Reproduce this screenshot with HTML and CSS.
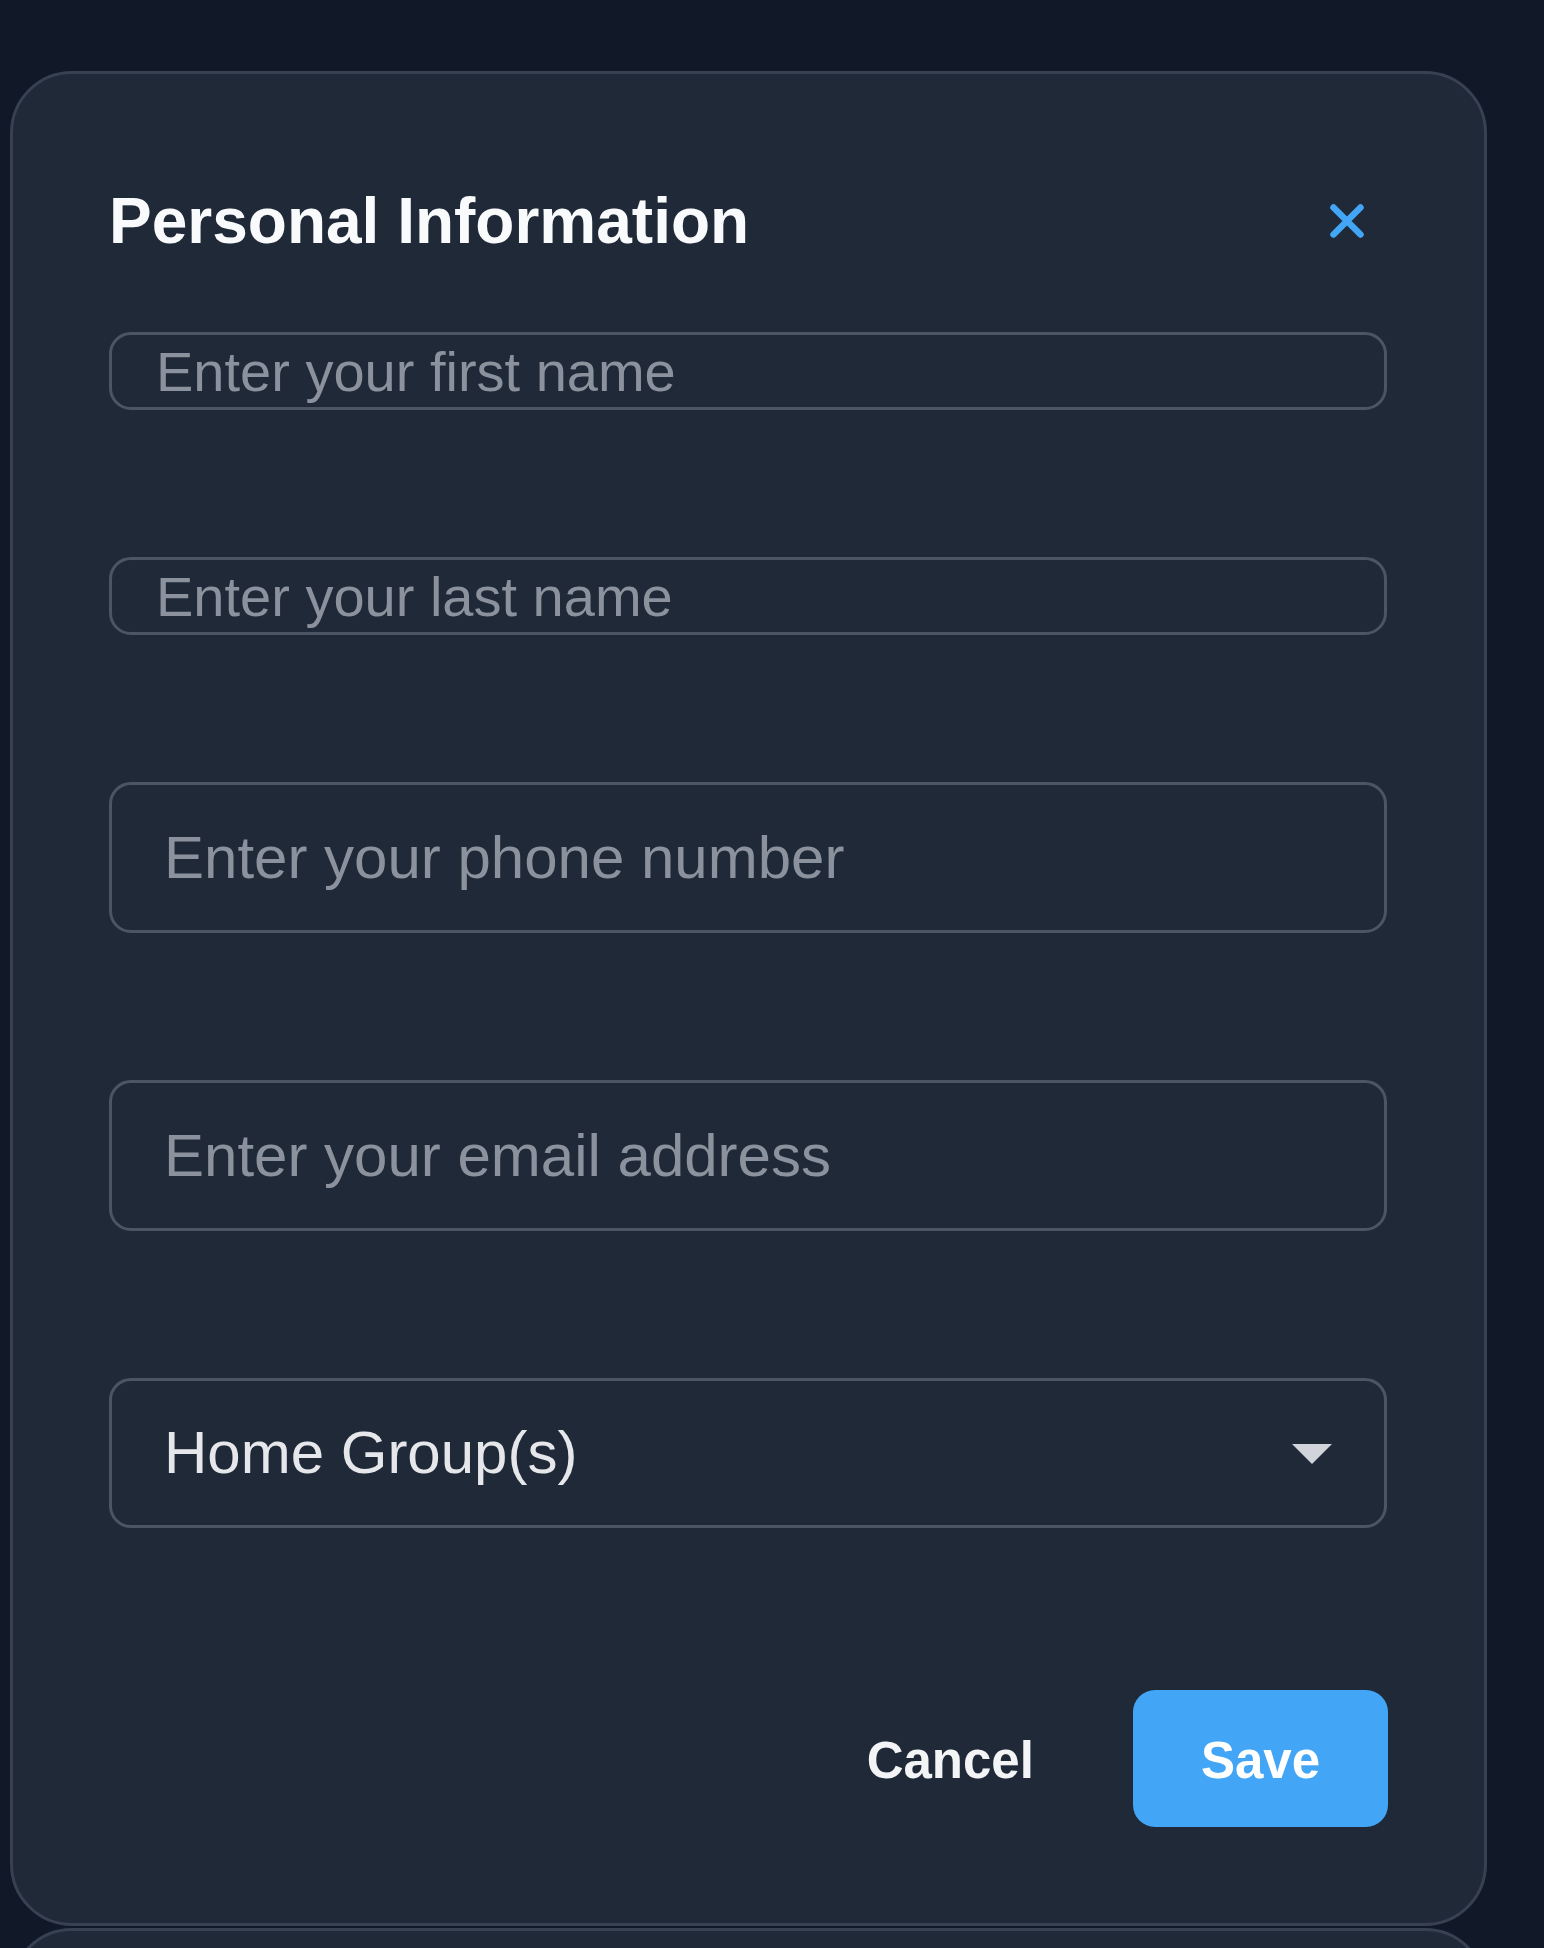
FILE: index.html
```html
<!DOCTYPE html>
<html lang="en">
<head>
<meta charset="utf-8">
<title>Personal Information</title>
<link rel="stylesheet" href="styles.css">
</head>
<body>
<div class="page">
  <section class="card">
    <header class="card-header">
      <h1 class="title">Personal Information</h1>
      <button class="close-btn" type="button" aria-label="Close">
        <svg width="34" height="34" viewBox="0 0 34 34" aria-hidden="true">
          <path d="M3.5 3.5 L30.5 30.5 M30.5 3.5 L3.5 30.5" stroke="#42a5f5" stroke-width="6.5" stroke-linecap="round" fill="none"/>
        </svg>
      </button>
    </header>
    <form class="form">
      <input class="field field-sm" type="text" placeholder="Enter your first name">
      <input class="field field-sm" type="text" placeholder="Enter your last name">
      <input class="field field-lg" type="tel" placeholder="Enter your phone number">
      <input class="field field-lg" type="email" placeholder="Enter your email address">
      <div class="field field-lg select" role="button" tabindex="0">
        <span class="select-label">Home Group(s)</span>
        <span class="select-arrow"></span>
      </div>
      <div class="actions">
        <button class="btn btn-cancel" type="button">Cancel</button>
        <button class="btn btn-save" type="button">Save</button>
      </div>
    </form>
  </section>
  <section class="card card-next"></section>
</div>
</body>
</html>
```

FILE: styles.css
```css
* {
  box-sizing: border-box;
}

html, body {
  margin: 0;
  padding: 0;
  background: #111827;
}

body {
  font-family: "Liberation Sans", Arial, Helvetica, sans-serif;
}

.page {
  height: 1948px;
  overflow: hidden;
  padding: 71px 57px 0 10px;
}

.card {
  width: 1477px;
  background: #1f2937;
  border: 3px solid #374151;
  border-radius: 62px;
  padding: 107px 97px 96px 96px;
}

.card-next {
  margin-top: 2px;
  height: 600px;
}

.card-header {
  display: flex;
  align-items: center;
  justify-content: space-between;
  height: 80px;
}

.title {
  margin: 0;
  font-size: 64px;
  line-height: 64px;
  font-weight: 700;
  color: #f9fafb;
}

.close-btn {
  width: 80px;
  height: 80px;
  padding: 0;
  border: 0;
  background: transparent;
  display: flex;
  align-items: center;
  justify-content: center;
}

.form {
  display: flex;
  flex-direction: column;
  gap: 147px;
  margin-top: 71px;
}

.field {
  display: block;
  width: 100%;
  margin: 0;
  border: 3px solid #4b5563;
  background: #1f2937;
  color: #e5e7eb;
  font-family: "Liberation Sans", Arial, Helvetica, sans-serif;
  outline: none;
}

.field::placeholder {
  color: #8b929d;
  opacity: 1;
}

.field-sm {
  height: 78px;
  border-radius: 22px;
  font-size: 56px;
  padding: 0 20px 0 44px;
}

.field-lg {
  height: 151px;
  border-radius: 22px;
  font-size: 60px;
  padding: 0 20px 0 52px;
}

.select {
  display: flex;
  align-items: center;
  justify-content: space-between;
  padding-right: 52px;
  height: 150px;
}

.select-label {
  color: #e5e7eb;
  line-height: 1;
}

.select-arrow {
  width: 0;
  height: 0;
  border-left: 20px solid transparent;
  border-right: 20px solid transparent;
  border-top: 20px solid #d1d5db;
  margin-top: 2px;
}

.actions {
  display: flex;
  justify-content: flex-end;
  align-items: center;
  gap: 31px;
  margin-top: 15px;
}

.btn {
  height: 137px;
  padding: 4px 68px 0;
  border: 0;
  border-radius: 22px;
  font-family: "Liberation Sans", Arial, Helvetica, sans-serif;
  font-size: 51px;
  font-weight: 700;
  color: #ffffff;
  background: transparent;
}

.btn-cancel {
  color: #f3f4f6;
}

.btn-save {
  background: #42a5f5;
  margin-right: -1px;
}
```
